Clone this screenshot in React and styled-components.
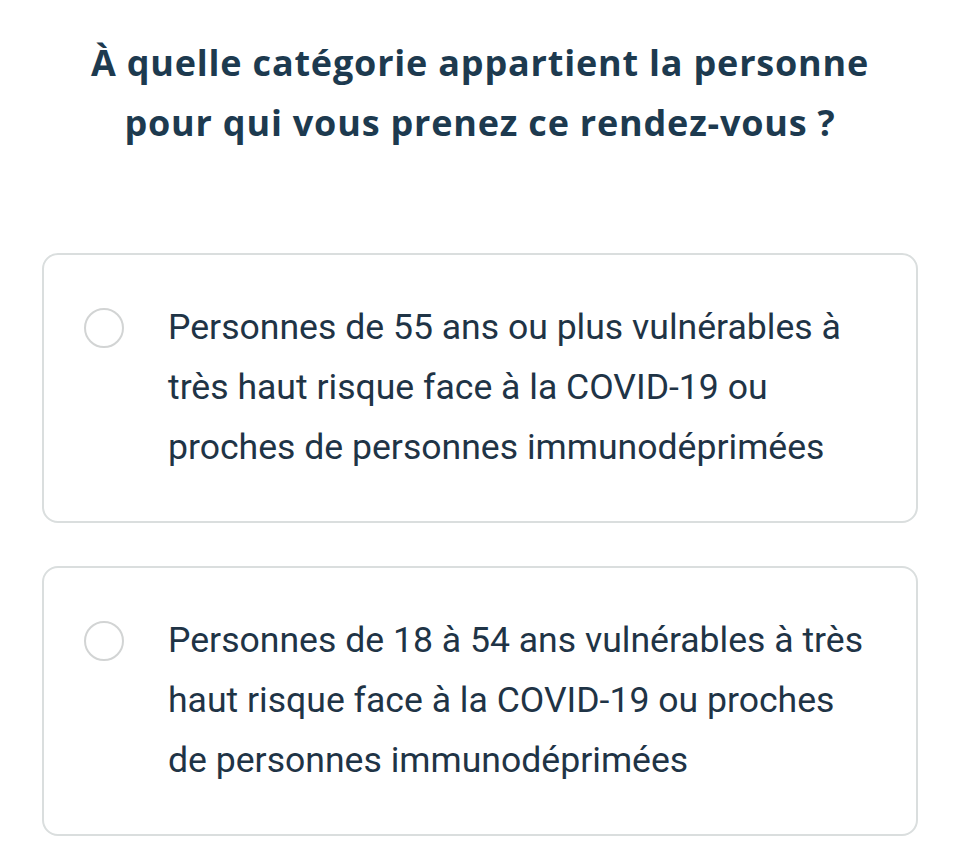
import React from 'react';
import styled, { createGlobalStyle } from 'styled-components';

const GlobalStyle = createGlobalStyle`
  html, body {
    margin: 0;
    padding: 0;
    background: #ffffff;
  }
`;

const Page = styled.div`
  width: 960px;
  height: 860px;
  box-sizing: border-box;
  padding: 33px 42px 0;
  display: flex;
  flex-direction: column;
  background: #ffffff;
  overflow: hidden;
`;

const Title = styled.h1`
  margin: 0 0 100px;
  text-align: center;
  font-family: "Open Sans", "Noto Sans", sans-serif;
  font-size: 36px;
  font-weight: 700;
  line-height: 60px;
  color: #1d3a4f;
  letter-spacing: 0.8px;
  white-space: nowrap;
`;

const Options = styled.div`
  display: flex;
  flex-direction: column;
  gap: 43px;
`;

const Card = styled.label`
  display: flex;
  align-items: flex-start;
  gap: 44px;
  box-sizing: border-box;
  height: 270px;
  padding: 42px 20px 42px 40px;
  border: 2px solid #dadede;
  border-radius: 16px;
  background: #ffffff;
  cursor: pointer;
`;

const Radio = styled.span`
  flex: none;
  width: 40px;
  height: 40px;
  margin-top: 11px;
  box-sizing: border-box;
  border: 2px solid #d2d4d4;
  border-radius: 50%;
`;

const OptionText = styled.span`
  font-family: Roboto, "Liberation Sans", sans-serif;
  font-size: 35.6px;
  font-weight: 400;
  line-height: 60px;
  color: #1f3446;
  white-space: nowrap;
`;

const options = [
  [
    'Personnes de 55 ans ou plus vulnérables à',
    'très haut risque face à la COVID-19 ou',
    'proches de personnes immunodéprimées',
  ],
  [
    'Personnes de 18 à 54 ans vulnérables à très',
    'haut risque face à la COVID-19 ou proches',
    'de personnes immunodéprimées',
  ],
];

export default function App() {
  return (
    <>
      <GlobalStyle />
      <Page>
        <Title>
          À quelle catégorie appartient la personne
          <br />
          pour qui vous prenez ce rendez-vous ?
        </Title>
        <Options>
          {options.map((lines, i) => (
            <Card key={i}>
              <Radio />
              <OptionText>
                {lines.map((line, j) => (
                  <React.Fragment key={j}>
                    {line}
                    {j < lines.length - 1 && <br />}
                  </React.Fragment>
                ))}
              </OptionText>
            </Card>
          ))}
        </Options>
      </Page>
    </>
  );
}
